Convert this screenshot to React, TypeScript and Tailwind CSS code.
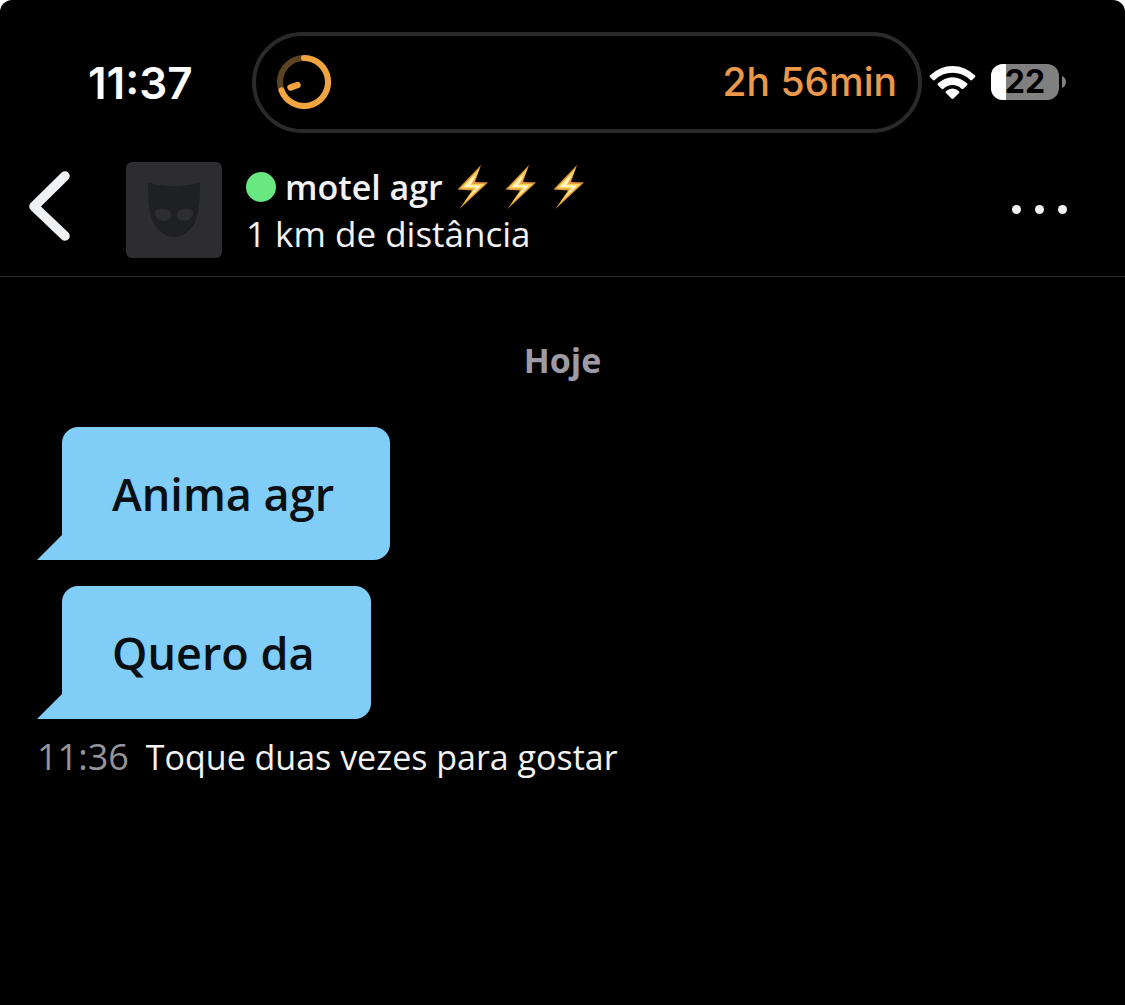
import clsx from "clsx";

const messages = ["Anima agr", "Quero da"];

function TimerRing() {
  return (
    <svg viewBox="0 0 54 54" className="h-[54px] w-[54px]" fill="none" aria-hidden="true">
      <circle cx="27" cy="27" r="24" stroke="#5c4422" strokeWidth="6" />
      <path
        d="M27 3A24 24 0 1 1 4.5 35.3"
        stroke="#f2a53f"
        strokeWidth="6"
        strokeLinecap="round"
      />
      <path d="M13.6 32.5 20.5 30" stroke="#f2a53f" strokeWidth="6.5" strokeLinecap="round" />
    </svg>
  );
}

function WifiIcon() {
  return (
    <svg viewBox="0 0 47 35" className="h-[35px] w-[47px]" fill="#fff" aria-label="Wi-Fi">
      <path d="M1.1 10.3a31.5 31.5 0 0 1 44.8 0c.6.6.6 1.3 0 1.9l-2.8 2.8c-.6.6-1.3.6-1.9 0a25.2 25.2 0 0 0-35.4 0c-.6.6-1.3.6-1.9 0l-2.8-2.8c-.6-.6-.6-1.3 0-1.9Z" />
      <path d="M9 18.3a20.6 20.6 0 0 1 29 0c.6.6.6 1.3 0 1.9l-3.6 3.5c-.6.6-1.3.6-1.9 0a13 13 0 0 0-18 0c-.6.6-1.3.6-1.9 0L9 20.2c-.6-.6-.6-1.3 0-1.9Z" />
      <path d="M17 26.2a9.4 9.4 0 0 1 13 0c.6.6.6 1.2 0 1.8l-5.5 5.6c-.6.6-1.4.6-2 0L17 28c-.6-.6-.6-1.2 0-1.8Z" />
    </svg>
  );
}

function Battery({ level }: { level: number }) {
  return (
    <div className="flex items-center gap-[3px]">
      <div className="relative flex h-9 w-[68px] items-center justify-center">
        <div className="absolute inset-0 overflow-hidden rounded-xl bg-[#808080]">
          <div className="h-full bg-white" style={{ width: `${level}%` }} />
        </div>
        <span className="relative text-[32px] leading-9 font-bold text-black">{level}</span>
      </div>
      <svg viewBox="0 0 4 12" className="h-3 w-1" fill="#808080" aria-hidden="true">
        <path d="M0 0C2.5 1 4 3.3 4 6S2.5 11 0 12Z" />
      </svg>
    </div>
  );
}

function StatusBar() {
  return (
    <div className="flex items-center pt-8 pb-[29px] font-['Inter',sans-serif]">
      <div className="w-[252px] shrink-0 pl-[88px] text-[44px] leading-[48px] font-semibold text-white">
        11:37
      </div>
      <div className="flex h-[101px] flex-1 items-center justify-between rounded-full border-4 border-[#2a2a2a] px-[21px] pb-px">
        <TimerRing />
        <span className="text-[39px] leading-[48px] font-medium text-[#ec984b]">2h 56min</span>
      </div>
      <div className="flex items-center gap-[15px] pr-[59px] pb-px pl-[7px]">
        <WifiIcon />
        <Battery level={22} />
      </div>
    </div>
  );
}

function MaskIcon() {
  return (
    <svg viewBox="0 0 54 56" className="h-14 w-[54px]" aria-hidden="true">
      <path
        d="M3 1c6 2 15 3 24 3S45 3 51 1c1.5 0 2 1 2 3 0 14-1 29-6 38-4 7-12 13-20 13S11 49 7 42C2 33 1 18 1 4c0-2 .5-3 2-3Z"
        fill="#1f2022"
      />
      <path
        d="M8 31c0-3 2-4 6-4 6 0 10 2 10 6 0 3-3 6-7 6-5 0-9-4-9-8ZM46 31c0-3-2-4-6-4-6 0-10 2-10 6 0 3 3 6 7 6 5 0 9-4 9-8Z"
        fill="#2d2d2f"
      />
    </svg>
  );
}

function Bolt() {
  return (
    <svg viewBox="0 0 32 46" className="h-[46px] w-8" aria-hidden="true">
      <path d="M24 1 .5 25.5 15 26.500 2.500 45 31 18.500 18 18Z" fill="#e39b3c" />
      <path d="M22.500 4.500 3.500 24.500 17.500 24.500 6.500 39.500 27.500 20 15 20Z" fill="#fbd45c" />
      <path d="M19.500 9.500 7 23 19.500 23 13 32 24 21.500 13 21.500Z" fill="#fff8cf" />
    </svg>
  );
}

function ChatHeader() {
  return (
    <header className="flex items-center border-b border-[#2a2a2a] pr-[58px] pb-[18px] pl-7 text-[#f2f2f5]">
      <button type="button" aria-label="Voltar" className="mr-[56px] -mt-2">
        <svg viewBox="0 0 42 72" className="h-[72px] w-[42px]" fill="none" aria-hidden="true">
          <path
            d="M37 6 6 36.5 37 66"
            stroke="#f0f1f3"
            strokeWidth="9.5"
            strokeLinecap="round"
            strokeLinejoin="round"
          />
        </svg>
      </button>
      <div className="flex h-24 w-24 shrink-0 items-center justify-center rounded-md bg-[#2d2d2f]">
        <MaskIcon />
      </div>
      <div className="ml-6 flex-1 pt-[2px]">
        <h1 className="flex items-center text-[34px] leading-[46px] font-semibold">
          <span className="mr-[9px] h-[30px] w-[30px] rounded-full bg-[#69e781]" />
          motel agr
          <span role="img" aria-label="raios" className="ml-[14px] flex gap-4">
            <Bolt />
            <Bolt />
            <Bolt />
          </span>
        </h1>
        <p className="text-[35px] leading-[48px]">1 km de distância</p>
      </div>
      <button type="button" aria-label="Mais opções" className="flex gap-[14px] pb-[2px]">
        <span className="h-[9px] w-[9px] rounded-full bg-[#f2f2f2]" />
        <span className="h-[9px] w-[9px] rounded-full bg-[#f2f2f2]" />
        <span className="h-[9px] w-[9px] rounded-full bg-[#f2f2f2]" />
      </button>
    </header>
  );
}

function Bubble({ text, last }: { text: string; last: boolean }) {
  return (
    <li className={clsx("flex items-end", !last && "mb-[26px]")}>
      <svg viewBox="0 0 26 26" className="-mr-px h-[26px] w-[26px]" fill="#80cdf8" aria-hidden="true">
        <path d="M26 0V26H0Z" />
      </svg>
      <p className="rounded-2xl rounded-bl-none bg-[#80cdf8] py-[34px] pr-[56px] pl-[50px] text-[45px] leading-[65px] font-semibold text-[#0a0f13]">
        {text}
      </p>
    </li>
  );
}

export default function App() {
  return (
    <div className="bg-white">
      <div className="min-h-screen rounded-t-xl bg-black font-['Open_Sans',sans-serif]">
        <StatusBar />
        <ChatHeader />
        <main className="px-[37px] pt-[59px]">
          <h2 className="text-center text-[34px] leading-[48px] font-bold text-[#9d9ba5]">Hoje</h2>
          <ul className="mt-[43px]">
            {messages.map((text, i) => (
              <Bubble key={text} text={text} last={i === messages.length - 1} />
            ))}
          </ul>
          <p className="mt-[14px] text-[34px] leading-[48px] text-[#f2f2f2]">
            <time className="mr-[17px] text-[36px] text-[#96949c]">11:36</time>
            Toque duas vezes para gostar
          </p>
        </main>
      </div>
    </div>
  );
}
